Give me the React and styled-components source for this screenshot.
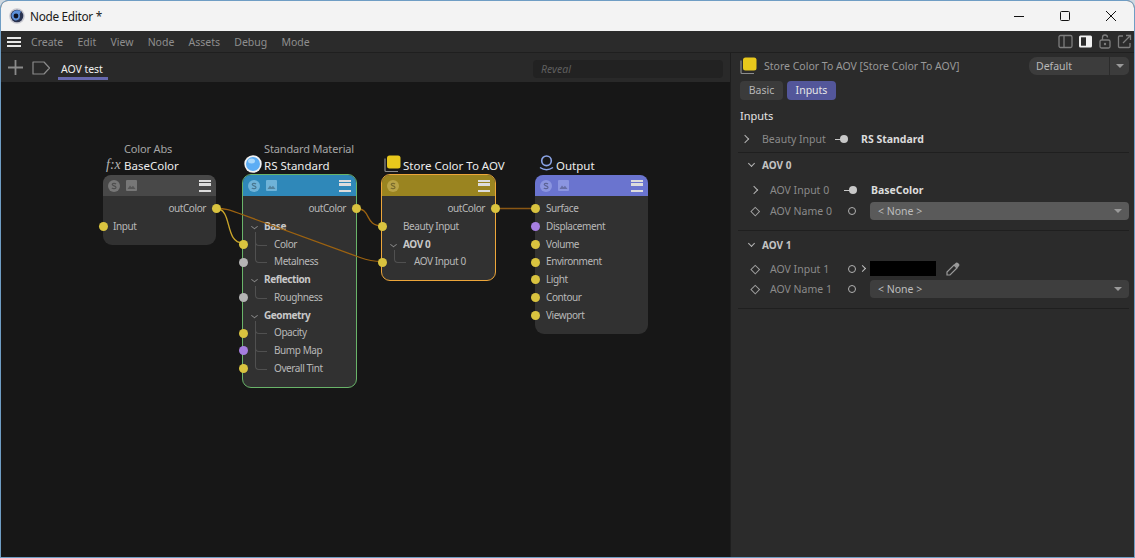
import React from "react";
import styled, { createGlobalStyle } from "styled-components";

const Global = createGlobalStyle`
  html, body { margin: 0; padding: 0; background: #cfd8e0; }
  * { box-sizing: border-box; }
`;

const Win = styled.div`
  width: 1135px; height: 558px; display: flex; flex-direction: column; overflow: hidden;
  border: 1px solid #6f9dc4; border-radius: 8px 8px 0 0; background: #2b2b2b;
  font-family: "Noto Sans", "Open Sans", sans-serif; font-size: 10.5px; color: #bdbdbd;
`;
const TitleBar = styled.div`
  height: 30px; flex: none; background: #f3f3f3; display: flex; align-items: center; padding-left: 8px;
  color: #1a1a1a; font-size: 11.8px; letter-spacing: -0.3px; gap: 5px;
`;
const WinButtons = styled.div`margin-left: auto; display: flex; height: 100%;`;
const WinButton = styled.div`width: 46px; display: flex; align-items: center; justify-content: center;`;
const MenuBar = styled.div`
  height: 22px; flex: none; display: flex; align-items: center; background: #2b2b2b;
  border-bottom: 1px solid #1f1f1f; padding: 0 2px 0 6px; color: #8e8e8e;
`;
const Burger = styled.div`
  width: 14px; height: 10px; margin-right: 10px; border-top: 2px solid #e8e8e8; border-bottom: 2px solid #e8e8e8; position: relative;
  &::after { content: ""; position: absolute; left: 0; right: 0; top: 2px; height: 2px; background: #e8e8e8; }
`;
const MenuItem = styled.span`margin-right: 14.2px;`;
const MenuIcons = styled.div`margin-left: auto; display: flex; gap: 5px; align-items: center;`;
const Main = styled.div`flex: 1; display: flex; min-height: 0;`;
const Left = styled.div`width: 729px; flex: none; display: flex; flex-direction: column;`;
const TabBar = styled.div`
  height: 29px; flex: none; background: #292929; display: flex; align-items: center; padding: 0 7px 0 6px; position: relative;
`;
const TabLabel = styled.div`
  margin-left: 7px; width: 50px; height: 27px; padding: 7px 0 0 3px; color: #f0f0f0; border-bottom: 3px solid #6668ae; align-self: flex-start; line-height: 18px; letter-spacing: -0.05px;
`;
const Reveal = styled.div`
  margin: 2px 0 0 auto; width: 190px; height: 18px; border-radius: 4px; background: #222222; color: #5f5f5f; font-style: italic; padding-left: 8px; line-height: 18px;
`;
const Canvas = styled.div`flex: 1; position: relative; background: #171717; overflow: hidden;`;
const Wires = styled.svg`position: absolute; left: 0; top: 0; z-index: 2; pointer-events: none;`;

const Card = styled.div`
  position: absolute; left: ${p => p.$x}px; top: 93px; background: #313131; border-radius: 9px;
  border: ${p => (p.$edge ? `1px solid ${p.$edge}` : "none")};
  margin: ${p => (p.$edge ? "-1px" : "0")}; width: ${p => (p.$edge ? 115 : 113)}px; padding-bottom: ${p => p.$pb || 9.5}px;
`;
const Titles = styled.div`position: absolute; left: 21px; bottom: 100%; padding-bottom: 1px; white-space: nowrap; line-height: 17px;`;
const Sub = styled.div`color: #a5a5a5; font-size: 11px; letter-spacing: -0.15px;`;
const Name = styled.div`color: #ededed; font-size: 11.5px;`;
const TitleIcon = styled.div`position: absolute; left: -21px; bottom: 2px; width: 22px; height: 20px;`;
const Fx = styled.span`
  position: absolute; left: -18px; bottom: 2px; font: italic 14px "Liberation Serif", serif; color: #b4b4b4;
`;
const Head = styled.div`
  height: 21px; background: ${p => p.$c}; border-radius: 8px 8px 0 0; display: flex; align-items: center; padding: 0 5px 0 5px; gap: 6px;
  margin-bottom: 4px; color: ${p => p.$i};
`;
const HeadMenu = styled.div`
  margin-left: auto; width: 12px; height: 12px; border-top: 2.5px solid #dcdcdc; border-bottom: 2.5px solid #dcdcdc; position: relative;
  &::after { content: ""; position: absolute; left: 0; right: 0; top: 1.75px; height: 2.5px; background: #dcdcdc; }
`;
const Row = styled.div`
  height: 17.75px; line-height: 17.75px; position: relative; padding-left: ${p => p.$in}px; color: #b8b8b8; white-space: nowrap; font-size: 10px; letter-spacing: -0.42px;
  text-align: ${p => (p.$right ? "right" : "left")}; padding-right: ${p => (p.$right ? 10 : 0)}px;
  font-weight: ${p => (p.$b ? 700 : 400)};
  ${p => p.$b && "color:#c8c8c8;"}
  ${p => p.$tree && `
    &::before { content: ""; position: absolute; left: 12px; top: ${9 - p.$tree}px; width: 11px; height: ${p.$tree}px;
      border-left: 1px solid #505050; border-bottom: 1px solid #505050; border-bottom-left-radius: 4px; }
  `}
`;
const Fold = styled.span`
  position: absolute; left: 9px; top: 6px; width: 5px; height: 5px; border-right: 1px solid #8a8a8a; border-bottom: 1px solid #8a8a8a;
  transform: scale(1, .8) rotate(45deg); transform-origin: center;
`;
const Port = styled.span`
  position: absolute; z-index: 3; top: 4.4px; width: 9px; height: 9px; border-radius: 50%; background: ${p => p.$c || "#d9c33f"};
  ${p => (p.$out ? "right: -4.5px;" : "left: -4.5px;")}
`;

const Panel = styled.div`
  flex: 1; background: #2b2b2b; border-left: 1px solid #1e1e1e; padding: 0 5px 0 7px; display: flex; flex-direction: column;
`;
const PanelHead = styled.div`display: flex; align-items: center; height: 25px; padding-left: 2px; color: #999; gap: 5px;`;
const PanelTitle = styled.span`margin-left: 1px;`;
const Preset = styled.div`
  margin-left: auto; width: 100px; height: 18px; border-radius: 8px 5px 5px 8px; background: #3c3c3c; color: #b8b8b8; padding-left: 7px; line-height: 18px;
  display: flex;
`;
const PresetArrow = styled.div`
  margin-left: auto; width: 20px; border-left: 1px solid #2b2b2b; display: flex; align-items: center; justify-content: center;
`;
const Caret = styled.span`
  display: block; width: 0; height: 0; border-left: 4px solid transparent; border-right: 4px solid transparent; border-top: 4px solid #9a9a9a;
`;
const Tabs = styled.div`display: flex; gap: 4px; padding-left: 2px; margin-top: 3px; height: 19px;`;
const TabBtn = styled.div`
  height: 19px; line-height: 19px; width: ${p => p.$w}px; border-radius: 4px; text-align: center;
  background: ${p => (p.$on ? "#53569a" : "#3b3b3b")}; color: ${p => (p.$on ? "#e6e6e6" : "#b5b5b5")};
`;
const Heading = styled.div`color: #e4e4e4; padding-left: 2px; margin-top: 7px; height: 18px; line-height: 18px; font-size: 11px;`;
const Section = styled.div`
  border-bottom: 1px solid #1f1f1f; padding: ${p => p.$pad};
`;
const PropRow = styled.div`
  display: grid; grid-template-columns: ${p => p.$cols || "32px 69px 32px 1fr"}; align-items: center;
  height: ${p => p.$h || 20.5}px; color: #8a8a8a; white-space: nowrap;
`;
const Marker = styled.div`display: flex; justify-content: center; align-items: center; padding-left: ${p => p.$l || 0}px; padding-right: ${p => p.$r || 0}px;`;
const Diamond = styled.span`display: block; width: 6.5px; height: 6.5px; border: 1px solid #a0a0a0; transform: rotate(45deg);`;
const Chevron = styled.span`display: block; width: 6px; height: 6px; border-top: 1.2px solid #b5b5b5; border-right: 1.2px solid #b5b5b5; transform: rotate(45deg);`;
const Ring = styled.div`
  width: 8px; height: 8px; border: 1.3px solid #b0b0b0; border-radius: 50%; margin-left: 9px;
`;
const Link = styled.div`
  width: 12.5px; height: 8px; margin-left: ${p => p.$m}px; position: relative;
  &::before { content: ""; position: absolute; left: 0; top: 3.3px; width: 6px; height: 1.4px; background: #c8c8c8; }
  &::after { content: ""; position: absolute; right: 0; top: 0; width: 8px; height: 8px; border-radius: 50%; background: #c8c8c8; }
`;
const Strong = styled.div`color: #dcdcdc; font-weight: 700; font-size: 10.5px;`;
const SectionHead = styled.div`
  height: 24px; margin-bottom: ${p => p.$mb}px; display: flex; align-items: center; gap: 8px; padding-left: 11px; color: #c4c4c4; font-weight: 700; font-size: 10px;
`;
const Down = styled.span`display: block; width: 5px; height: 5px; border-right: 1px solid #b5b5b5; border-bottom: 1px solid #b5b5b5; transform: rotate(45deg); margin-top: -3px;`;
const Select = styled.div`
  height: 18px; border-radius: 4px; background: ${p => p.$c}; display: flex; align-items: center; padding: 0 7px 0 8px; color: #bdbdbd; margin-left: -1px;
  & > span:last-child { margin-left: auto; }
`;
const ColorCell = styled.div`display: flex; align-items: center; position: relative; margin-left: -1px;`;
const Swatch = styled.div`width: 66px; height: 15px; background: #000;`;
const Small = styled.span`position: absolute; left: -10px; top: 5px; width: 5px; height: 5px; border-top: 1px solid #c0c0c0; border-right: 1px solid #c0c0c0; transform: rotate(45deg);`;
const Dropper = styled.div`margin-left: 10px; display: flex;`;
const TagIcon = styled.svg`margin-left: 8px;`;
const Abs = styled.span`position: absolute; left: ${p => p.$l}px; bottom: ${p => p.$b}px; display: flex;`;

const HeadIcons = ({ img = true }) => (
  <>
    <svg width="12" height="12" viewBox="0 0 12 12">
      <circle cx="6" cy="6" r="6" fill="currentColor" />
      <path d="M8 4C7 3 4.2 3 4.2 4.6C4.2 6.2 8 5.6 8 7.4C8 9 5 9 3.8 8" fill="none" stroke="#0005" strokeWidth="1.2" />
    </svg>
    {img && (
      <svg width="11" height="11" viewBox="0 0 11 11">
        <rect width="11" height="11" rx="1" fill="currentColor" />
        <path d="M1.5 9L4 5.5L5.5 7.2L7 5.8L9.5 9Z" fill="#0004" />
      </svg>
    )}
  </>
);
const G = "#b4b4b4", P = "#a67ee0";

const StoreIcon = () => (
  <svg width="18" height="18" viewBox="0 0 18 18">
    <path d="M1 3.5V15.5Q1 16.5 2 16.5H14" fill="none" stroke="#8c8c8c" strokeWidth="1.2" />
    <rect x="3" y="0.5" width="13.5" height="13" rx="2.5" fill="#e8c81c" />
  </svg>
);

export default function App() {
  return (
    <Win>
      <Global />
      <TitleBar>
        <svg width="16" height="16" viewBox="0 0 16 16">
          <circle cx="8" cy="8" r="7.8" fill="#c8c8d0" />
          <circle cx="8" cy="8" r="6.3" fill="#2a3350" />
          <path d="M4.5 11.5a5 4.5 0 0 1 7.5-8a5 5 0 0 0-1 5a4 4 0 0 1-6.5 3z" fill="#5b8fd8" />
          <circle cx="7" cy="8" r="2.4" fill="#0e1322" />
        </svg>
        Node Editor *
        <WinButtons>
          <WinButton><svg width="12" height="12"><path d="M1 6.5H11" stroke="#111" strokeWidth="1" /></svg></WinButton>
          <WinButton><svg width="12" height="12"><rect x="1.5" y="1.5" width="9" height="9" rx="1" fill="none" stroke="#111" /></svg></WinButton>
          <WinButton><svg width="12" height="12"><path d="M1 1L11 11M11 1L1 11" stroke="#111" strokeWidth="1" /></svg></WinButton>
        </WinButtons>
      </TitleBar>
      <MenuBar>
        <Burger />
        {["Create", "Edit", "View", "Node", "Assets", "Debug", "Mode"].map(m => <MenuItem key={m}>{m}</MenuItem>)}
        <MenuIcons>
          <svg width="15" height="15" viewBox="0 0 15 15"><rect x="1" y="1.5" width="13" height="12" rx="1.5" fill="none" stroke="#7d7d7d" strokeWidth="1.3" /><path d="M6 2V13" stroke="#7d7d7d" strokeWidth="1.3" /></svg>
          <svg width="15" height="15" viewBox="0 0 15 15"><rect x="1" y="1.5" width="13" height="12" rx="1.5" fill="#f2f2f2" /><rect x="3" y="3.3" width="5" height="8.4" fill="#2b2b2b" /></svg>
          <svg width="14" height="15" viewBox="0 0 14 15"><rect x="2" y="6" width="10" height="8" rx="1.5" fill="none" stroke="#7d7d7d" strokeWidth="1.3" /><path d="M4.5 6V3.5a2.5 2.5 0 0 1 5 0" fill="none" stroke="#7d7d7d" strokeWidth="1.3" /><circle cx="7" cy="10" r="1.2" fill="#7d7d7d" /></svg>
          <svg width="15" height="15" viewBox="0 0 15 15"><path d="M6 2H2.5Q1.5 2 1.5 3V12.5Q1.5 13.5 2.5 13.5H12Q13 13.5 13 12.5V9" fill="none" stroke="#7d7d7d" strokeWidth="1.3" /><path d="M6 9L13.5 1.5M9 1.5H13.5V6" fill="none" stroke="#7d7d7d" strokeWidth="1.3" /></svg>
        </MenuIcons>
      </MenuBar>
      <Main>
        <Left>
          <TabBar>
            <svg width="17" height="17" viewBox="0 0 17 17"><path d="M8.5 1V16M1 8.5H16" stroke="#8a8a8a" strokeWidth="1.8" /></svg>
            <TagIcon width="19" height="14" viewBox="0 0 19 14"><path d="M1 1H12L17.5 7L12 13H1Z" fill="none" stroke="#8a8a8a" strokeWidth="1.2" strokeLinejoin="round" /></TagIcon>
            <TabLabel>AOV test</TabLabel>
            <Reveal>Reveal</Reveal>
          </TabBar>
          <Canvas>
            <Card $x={102}>
              <Titles>
                <Sub>Color Abs</Sub>
                <Name>BaseColor</Name>
                <Fx>f:x</Fx>
              </Titles>
              <Head $c="#484848" $i="#777"><HeadIcons /><HeadMenu /></Head>
              <Row $right>outColor<Port $out /></Row>
              <Row $in={10}>Input<Port /></Row>
            </Card>

            <Card $x={242} $edge="#69b469">
              <Titles>
                <Sub>Standard Material</Sub>
                <Name>RS Standard</Name>
                <TitleIcon>
                  <Abs $l={1} $b={0}>
                    <svg width="18" height="18" viewBox="0 0 18 18">
                      <circle cx="9" cy="9" r="8.7" fill="#f2f2f2" />
                      <circle cx="9" cy="9" r="7" fill="#5cadf4" />
                      <ellipse cx="7.5" cy="6" rx="3.5" ry="2.5" fill="#a9d8fb" />
                    </svg>
                  </Abs>
                </TitleIcon>
              </Titles>
              <Head $c="#2f88b9" $i="#6fb3d8"><HeadIcons /><HeadMenu /></Head>
              <Row $right>outColor<Port $out /></Row>
              <Row $in={21} $b><Fold />Base</Row>
              <Row $in={31} $tree={12}>Color<Port /></Row>
              <Row $in={31} $tree={30}>Metalness<Port $c={G} /></Row>
              <Row $in={21} $b><Fold />Reflection</Row>
              <Row $in={31} $tree={12}>Roughness<Port $c={G} /></Row>
              <Row $in={21} $b><Fold />Geometry</Row>
              <Row $in={31} $tree={12}>Opacity<Port /></Row>
              <Row $in={31} $tree={30}>Bump Map<Port $c={P} /></Row>
              <Row $in={31} $tree={48}>Overall Tint<Port /></Row>
            </Card>

            <Card $x={381} $edge="#eda63a" $pb={9}>
              <Titles>
                <Name>Store Color To AOV</Name>
                <TitleIcon><Abs $l={2} $b={0}><StoreIcon /></Abs></TitleIcon>
              </Titles>
              <Head $c="#9a8420" $i="#b9a346"><HeadIcons img={false} /><HeadMenu /></Head>
              <Row $right>outColor<Port $out /></Row>
              <Row $in={21}>Beauty Input<Port /></Row>
              <Row $in={21} $b><Fold />AOV 0</Row>
              <Row $in={32} $tree={12}>AOV Input 0<Port /></Row>
            </Card>

            <Card $x={534}>
              <Titles>
                <Name>Output</Name>
                <TitleIcon>
                  <Abs $l={4} $b={1}>
                    <svg width="15" height="17" viewBox="0 0 15 17">
                      <circle cx="7.5" cy="5.8" r="4.8" fill="none" stroke="#8ba4e6" strokeWidth="1.6" />
                      <path d="M1 12.5Q7.5 17 14 12.5" fill="none" stroke="#8ba4e6" strokeWidth="1.5" />
                    </svg>
                  </Abs>
                </TitleIcon>
              </Titles>
              <Head $c="#6a74cf" $i="#8b95e0"><HeadIcons /><HeadMenu /></Head>
              <Row $in={11}>Surface<Port /></Row>
              <Row $in={11}>Displacement<Port $c={P} /></Row>
              <Row $in={11}>Volume<Port /></Row>
              <Row $in={11}>Environment<Port /></Row>
              <Row $in={11}>Light<Port /></Row>
              <Row $in={11}>Contour<Port /></Row>
              <Row $in={11}>Viewport<Port /></Row>
            </Card>

            <Wires width="729" height="476" viewBox="1 82 729 476">
              <g fill="none" strokeWidth="1.3">
                <path d="M216 208.5C233 208.5 224 243 243 243" stroke="#c9a52a" />
                <path d="M216 208.5C226 208.5 230 210 238 213L360 257.5C368 260.5 372 261.5 382 261.5" stroke="#9c6210" />
                <path d="M356 208.5C372 208.5 364 226 382 226" stroke="#9c6210" />
                <path d="M495 208.5H535" stroke="#8a5714" strokeWidth="1.6" />
              </g>
            </Wires>
          </Canvas>
        </Left>
        <Panel>
          <PanelHead>
            <StoreIcon />
            <PanelTitle>Store Color To AOV [Store Color To AOV]</PanelTitle>
            <Preset>Default<PresetArrow><Caret /></PresetArrow></Preset>
          </PanelHead>
          <Tabs>
            <TabBtn $w={43}>Basic</TabBtn>
            <TabBtn $w={49} $on>Inputs</TabBtn>
          </Tabs>
          <Heading>Inputs</Heading>
          <Section $pad="4px 0 2.75px">
            <PropRow $cols="24px 65px 34px 1fr"><Marker $r={10}><Chevron /></Marker>Beauty Input<Link $m={8} /><Strong>RS Standard</Strong></PropRow>
          </Section>
          <Section $pad="0 0 8.75px">
            <SectionHead $mb={2.75}><Down />AOV 0</SectionHead>
            <PropRow><Marker $r={1}><Chevron /></Marker>AOV Input 0<Link $m={5} /><Strong>BaseColor</Strong></PropRow>
            <PropRow><Marker $l={3}><Diamond /></Marker>AOV Name 0<Ring /><Select $c="#5a5a5a">&lt; None &gt;<Caret /></Select></PropRow>
          </Section>
          <Section $pad="2px 0 9px">
            <SectionHead $mb={2}><Down />AOV 1</SectionHead>
            <PropRow $h={20}><Marker $l={3}><Diamond /></Marker>AOV Input 1<Ring />
              <ColorCell><Small /><Swatch /><Dropper>
                <svg width="14" height="14" viewBox="0 0 14 14"><path d="M8 3L11 6L4 13H1V10Z" fill="none" stroke="#9a9a9a" strokeWidth="1.2" /><path d="M8 2.5L10 0.8Q11 0 12 1L13 2Q14 3 13 4L11.5 6Z" fill="#9a9a9a" /></svg>
              </Dropper></ColorCell>
            </PropRow>
            <PropRow $h={20}><Marker $l={3}><Diamond /></Marker>AOV Name 1<Ring /><Select $c="#3e3e3e">&lt; None &gt;<Caret /></Select></PropRow>
          </Section>
        </Panel>
      </Main>
    </Win>
  );
}
